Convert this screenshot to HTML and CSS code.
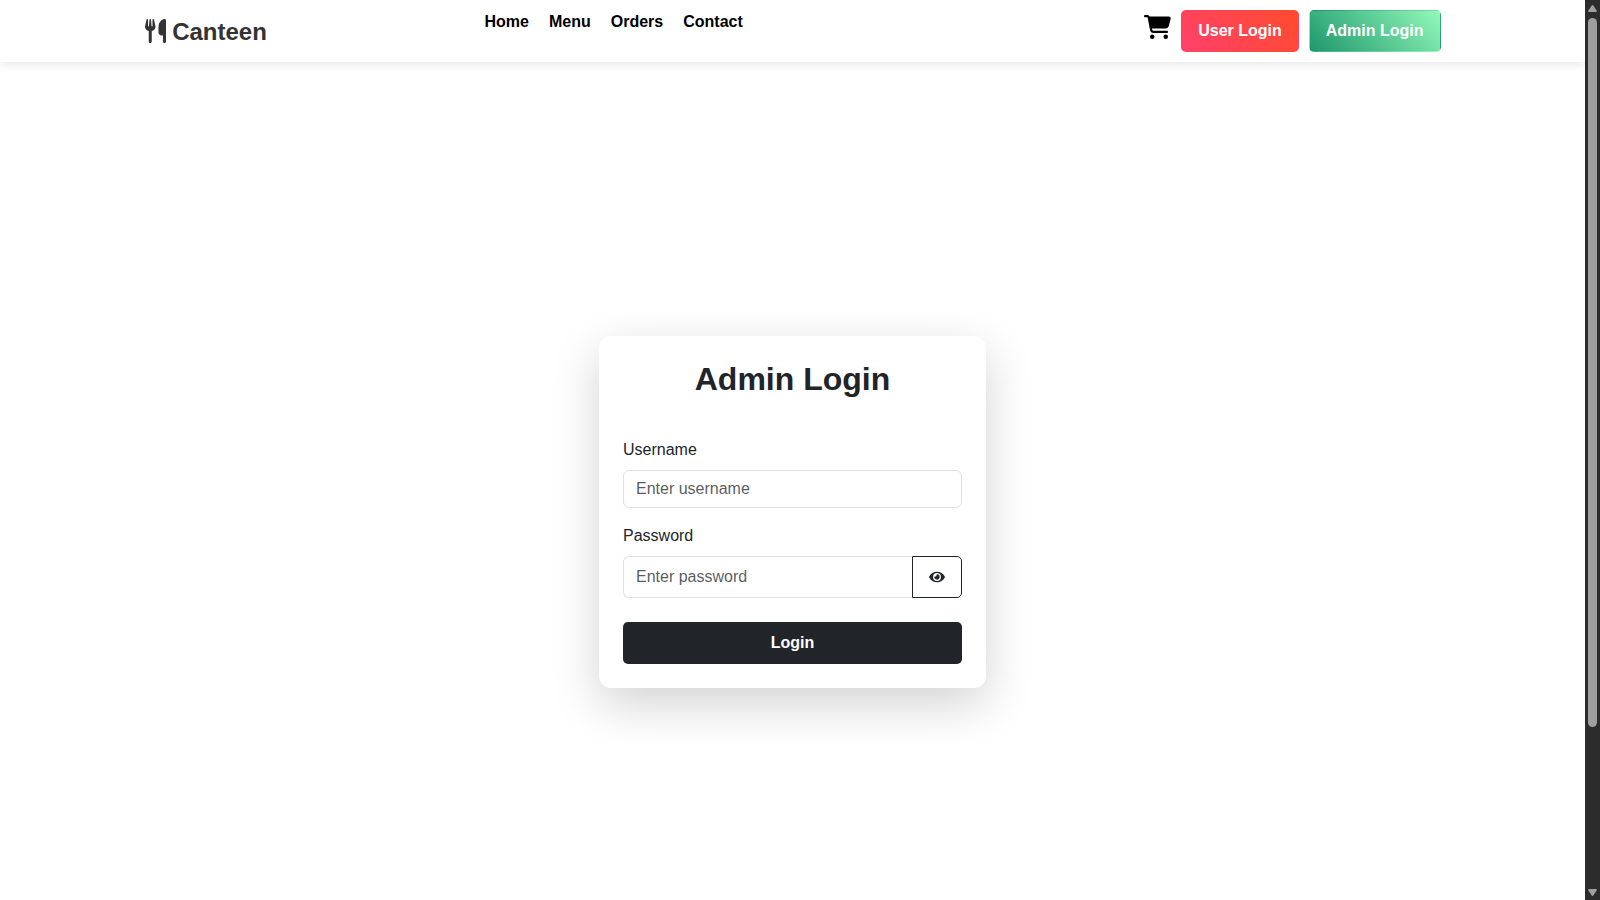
FILE: index.html
```html
<!DOCTYPE html>
<html lang="en">
<head>
<meta charset="utf-8">
<title>Canteen</title>
<link rel="stylesheet" href="styles.css">
</head>
<body>
<div class="page">
  <header class="navbar">
    <div class="container">
      <a class="brand" href="#"><svg class="brand-icon" viewBox="0 0 448 512" aria-hidden="true"><path d="M416 0C400 0 288 32 288 176V288c0 35.3 28.7 64 64 64h32V480c0 17.7 14.3 32 32 32s32-14.3 32-32V352 240 32c0-17.7-14.3-32-32-32zM64 16C64 7.8 57.9 1 49.7 .1S34.2 4.6 32.4 12.5L2.1 148.8C.7 155.1 0 161.5 0 167.9c0 45.9 35.1 83.6 80 87.7V480c0 17.7 14.3 32 32 32s32-14.3 32-32V255.6c44.9-4.1 80-41.8 80-87.7c0-6.4-.7-12.8-2.1-19.1L191.6 12.5c-1.8-8-9.3-13.3-17.4-12.4S160 7.8 160 16V150.2c0 5.4-4.4 9.8-9.8 9.8c-5.1 0-9.3-3.9-9.8-9L127.9 14.6C127.2 6.3 120.3 0 112 0s-15.2 6.3-15.9 14.6L83.7 151c-.5 5.1-4.7 9-9.8 9c-5.4 0-9.8-4.4-9.8-9.8V16z"/></svg> Canteen</a>
      <nav class="nav">
        <a href="#">Home</a>
        <a href="#">Menu</a>
        <a href="#">Orders</a>
        <a href="#">Contact</a>
      </nav>
      <div class="actions">
        <a class="cart" href="#" aria-label="Cart"><svg class="cart-icon" viewBox="0 0 576 512" aria-hidden="true"><path d="M0 24C0 10.7 10.7 0 24 0H69.5c22 0 41.5 12.8 50.6 32h411c26.3 0 45.5 25 38.6 50.4l-41 152.3c-8.5 31.4-37 53.3-69.5 53.3H170.7l5.4 28.5c2.2 11.3 12.1 19.5 23.6 19.5H488c13.3 0 24 10.7 24 24s-10.7 24-24 24H199.7c-34.6 0-64.3-24.6-70.7-58.5L77.4 54.5c-.7-3.8-4-6.5-7.9-6.5H24C10.7 48 0 37.3 0 24zM128 464a48 48 0 1 1 96 0 48 48 0 1 1 -96 0zm336-48a48 48 0 1 1 0 96 48 48 0 1 1 0-96z"/></svg></a>
        <button class="btn btn-user" type="button">User Login</button>
        <button class="btn btn-admin" type="button">Admin Login</button>
      </div>
    </div>
  </header>
  <main class="main">
    <form class="card">
      <h1 class="title">Admin Login</h1>
      <div class="field">
        <label for="username">Username</label>
        <input class="input" id="username" type="text" placeholder="Enter username">
      </div>
      <div class="field">
        <label for="password">Password</label>
        <div class="input-group">
          <input class="input" id="password" type="password" placeholder="Enter password">
          <button class="btn btn-eye" type="button" aria-label="Show password"><svg class="eye-icon" viewBox="0 0 576 512" aria-hidden="true"><path d="M572.52 241.4C518.29 135.59 410.93 64 288 64S57.68 135.64 3.48 241.41a32.35 32.35 0 0 0 0 29.19C57.71 376.41 165.07 448 288 448s230.32-71.64 284.52-177.41a32.35 32.35 0 0 0 0-29.19zM288 400a144 144 0 1 1 144-144 143.93 143.93 0 0 1-144 144zm0-240a95.31 95.31 0 0 0-25.31 3.79 47.85 47.85 0 0 1-66.9 66.9A95.78 95.78 0 1 0 288 160z"/></svg></button>
        </div>
      </div>
      <button class="btn btn-submit" type="submit">Login</button>
    </form>
  </main>
</div>
<div class="scrollbar" aria-hidden="true">
  <svg class="arrow" viewBox="0 0 9 7"><path d="M4.5 0Q5 0 5.5 .8L8.8 5.8Q9 7 8 7H1Q0 7 .2 5.8L3.5 .8Q4 0 4.5 0z"/></svg>
  <div class="track"><div class="thumb"></div></div>
  <svg class="arrow" viewBox="0 0 9 7"><path d="M4.5 7Q5 7 5.5 6.2L8.8 1.2Q9 0 8 0H1Q0 0 .2 1.2L3.5 6.2Q4 7 4.5 7z"/></svg>
</div>
</body>
</html>
```
FILE: styles.css
```css
* {
  box-sizing: border-box;
}

body {
  display: flex;
  height: 100vh;
  margin: 0;
  overflow: hidden;
  background: #fff;
  color: #212529;
  font-family: "Liberation Sans", Arial, sans-serif;
  font-size: 16px;
  line-height: 24px;
}

a {
  color: inherit;
  text-decoration: none;
}

.page {
  flex: 1;
  min-width: 0;
  overflow: hidden;
}

.navbar {
  padding: 10px 0;
  background: #fff;
  box-shadow: 0 2px 10px rgba(0, 0, 0, 0.1);
}

.container {
  display: grid;
  grid-template-columns: 1fr 1fr 2fr;
  max-width: 1320px;
  margin: 0 auto;
}

.brand {
  align-self: center;
  padding-left: 12px;
  color: #333;
  font-size: 24px;
  font-weight: bold;
}

.brand-icon {
  width: 21px;
  height: 24px;
  fill: currentColor;
  vertical-align: -3px;
}

.nav {
  display: flex;
  gap: 20px;
  padding-left: 22px;
  color: #000;
  font-weight: bold;
}

.actions {
  display: flex;
  justify-content: flex-end;
  gap: 10px;
  padding-right: 12px;
}

.cart {
  padding-top: 5px;
  color: #000;
}

.cart-icon {
  display: block;
  width: 27px;
  height: 24px;
  fill: currentColor;
}

.btn {
  padding: 8px 16px;
  border: 1px solid transparent;
  border-radius: 5px;
  color: #fff;
  font: inherit;
  font-weight: bold;
  cursor: pointer;
}

.btn-user {
  background: linear-gradient(45deg, #ff416c, #ff4b2b);
}

.btn-admin {
  background: linear-gradient(45deg, #1d976c, #93f9b9);
}

.main {
  display: flex;
  align-items: center;
  justify-content: center;
  min-height: 100vh;
}

.card {
  display: flex;
  flex-direction: column;
  width: 100%;
  max-width: 387px;
  padding: 24px;
  border-radius: 12px;
  background: #fff;
  box-shadow: 0 16px 48px rgba(0, 0, 0, 0.175);
}

.title {
  margin: 0 0 40px;
  font-size: 32px;
  line-height: 38px;
  text-align: center;
}

.field {
  display: flex;
  flex-direction: column;
  gap: 8px;
  margin-bottom: 16px;
}

.input {
  flex: 1;
  min-width: 0;
  padding: 6px 12px;
  border: 1px solid #dee2e6;
  border-radius: 6px;
  background: #fff;
  color: #212529;
  font: inherit;
}

.input::placeholder {
  color: rgba(33, 37, 41, 0.75);
}

.input-group {
  display: flex;
}

.input-group .input {
  border-right: 0;
  border-radius: 6px 0 0 6px;
}

.btn-eye {
  display: flex;
  align-items: center;
  height: 42px;
  border-color: #212529;
  border-radius: 0 5px 5px 0;
  background: #fff;
  color: #212529;
}

.eye-icon {
  width: 16px;
  height: 14px;
  fill: currentColor;
}

.btn-submit {
  margin-top: 8px;
  background: #212529;
}

.scrollbar {
  display: flex;
  flex-direction: column;
  gap: 6px;
  width: 15px;
  padding: 5px 3px 4px;
  background: #2c2c2c;
}

.arrow {
  width: 9px;
  height: 7px;
  fill: #9f9f9f;
}

.track {
  flex: 1;
}

.thumb {
  height: 82%;
  border-radius: 5px;
  background: #9f9f9f;
}
```
